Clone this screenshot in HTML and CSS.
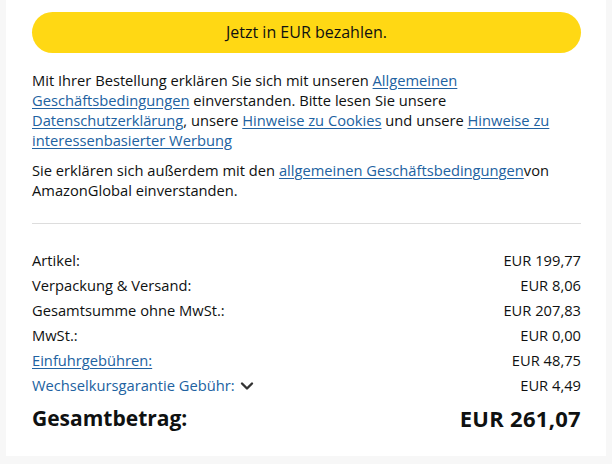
FILE: index.html
```html
<!DOCTYPE html>
<html>
<head>
	<meta charset="UTF-8">
	<title>Bestellung</title>
	<link rel="stylesheet" href="styles.css">
</head>
<body>
	<section class="card">
		<a href="javascript:;" class="pay">Jetzt in EUR bezahlen.</a>
		<p class="legal">Mit Ihrer Bestellung erklären Sie sich mit unseren <a href="javascript:;">Allgemeinen Geschäftsbedingungen</a> einverstanden. Bitte lesen Sie unsere <a href="javascript:;">Datenschutzerklärung</a>, unsere <a href="javascript:;">Hinweise zu Cookies</a> und unsere <a href="javascript:;">Hinweise zu interessenbasierter Werbung</a></p>
		<p class="legal">Sie erklären sich außerdem mit den <a href="javascript:;">allgemeinen Geschäftsbedingungen</a>von AmazonGlobal einverstanden.</p>
		<hr class="line">
		<ul class="sum">
			<li><span>Artikel:</span><span>EUR 199,77</span></li>
			<li><span>Verpackung &amp; Versand:</span><span>EUR 8,06</span></li>
			<li><span>Gesamtsumme ohne MwSt.:</span><span>EUR 207,83</span></li>
			<li><span>MwSt.:</span><span>EUR 0,00</span></li>
			<li><a href="javascript:;">Einfuhrgebühren:</a><span>EUR 48,75</span></li>
			<li><span class="fx">Wechselkursgarantie Gebühr:
				<svg width="14" height="10" viewBox="0 0 14 10"><path d="M2 2.5l5 5 5-5" fill="none" stroke="#333" stroke-width="2.4" stroke-linecap="round" stroke-linejoin="round"/></svg>
			</span><span>EUR 4,49</span></li>
			<li class="total"><span>Gesamtbetrag:</span><span class="amount">EUR 261,07</span></li>
		</ul>
	</section>
</body>
</html>
```
FILE: styles.css
```css
html,body{
	margin: 0;
	background: #f7f7f7;
}
body{
	font-family: "Open Sans", "Noto Sans", sans-serif;
	font-size: 14.7px;
	line-height: 20px;
	color: #0f1111;
}
.card{
	background: #fff;
	margin: 0 6px;
	padding: 12px 25px 30px 26px;
	box-sizing: border-box;
	height: 456px;
}
a{
	color: #2162a1;
	text-underline-offset: 2px;
}
.pay{
	display: block;
	height: 41px;
	line-height: 41px;
	border-radius: 21px;
	background: #ffd814;
	color: #0f1111;
	font-size: 16px;
	text-align: center;
	text-decoration: none;
}
.legal{
	margin: 17px 0 0;
}
.legal + .legal{
	margin-top: 10px;
}
.line{
	border: 0;
	border-top: 1px solid #ddd;
	margin: 23px 0 0;
}
.sum{
	list-style: none;
	margin: 26px 0 0;
	padding: 0;
}
.sum li{
	display: flex;
	justify-content: space-between;
	height: 25px;
}
.sum .fx{
	color: #2162a1;
}
.sum svg{
	margin-left: 2px;
}
.sum .total{
	font-size: 21px;
	font-weight: bold;
	line-height: 30px;
	height: 30px;
	margin-top: 3px;
}
.sum .amount{
	font-size: 22px;
	letter-spacing: .3px;
}
```
